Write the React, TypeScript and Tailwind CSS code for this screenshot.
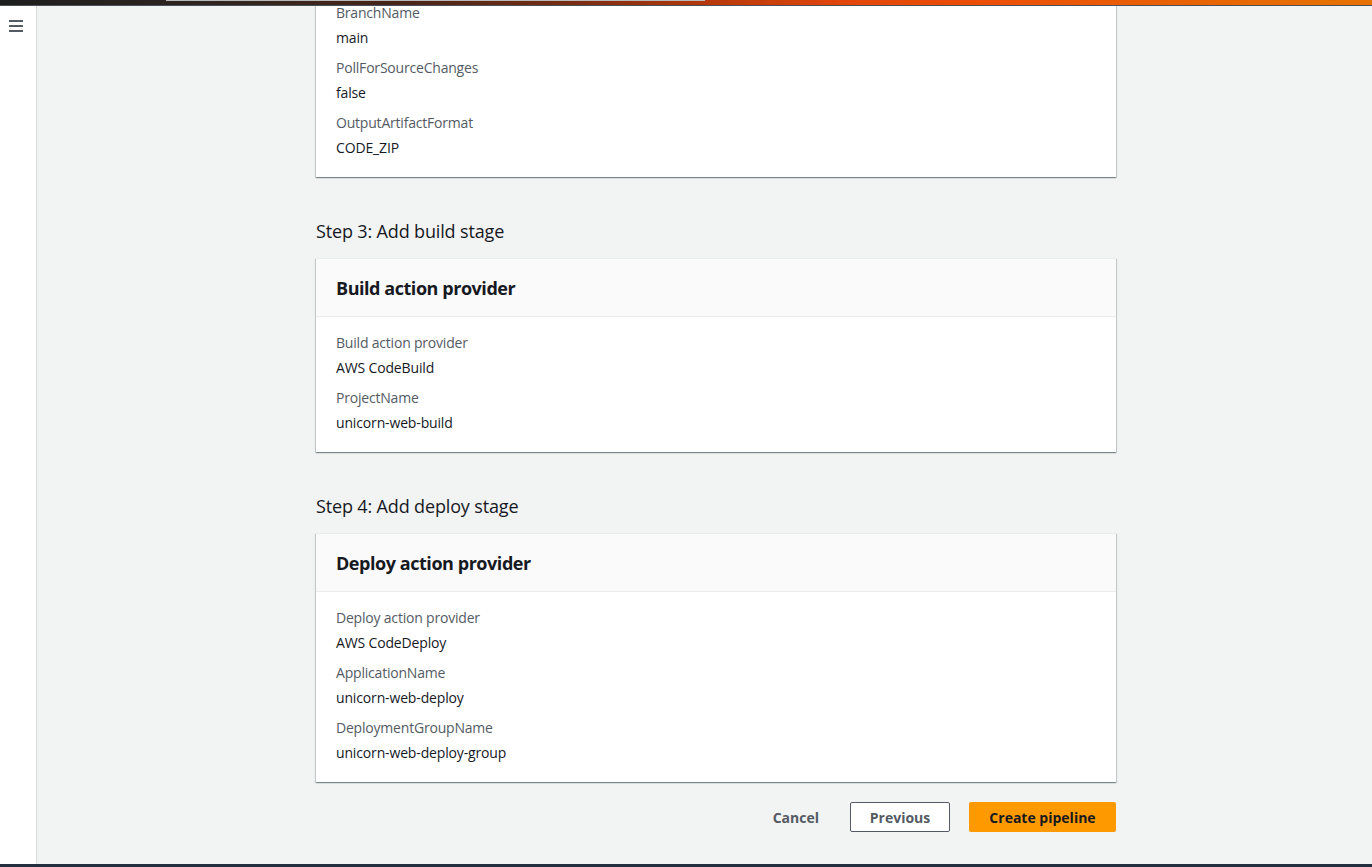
import React from "react";

const font = { fontFamily: '"Open Sans", "Noto Sans", Arial, sans-serif' };

function Field({ label, value }: { label: string; value: string }) {
  return (
    <div className="mb-[10px] last:mb-0">
      <div className="text-[14px] leading-[20px] tracking-[-0.2px] text-[#545b64]">{label}</div>
      <div className="mt-[5px] text-[14px] leading-[20px] tracking-[-0.15px] text-[#16191f]">{value}</div>
    </div>
  );
}

const cardCls =
  "bg-white shadow-[0_1px_1px_0_rgba(0,28,36,0.3),1px_1px_1px_0_rgba(0,28,36,0.15),-1px_1px_1px_0_rgba(0,28,36,0.15)] border-t border-[#eaeded]";

function Card({ title, fields }: { title?: string; fields: [string, string][] }) {
  return (
    <div className={cardCls}>
      {title && (
        <div className="h-[58px] box-border border-b border-[#eaeded] bg-[#fafafa] px-5 flex items-center">
          <h2 className="text-[18px] leading-[22px] font-bold tracking-[-0.45px] text-[#16191f]">{title}</h2>
        </div>
      )}
      <div className="px-5 pt-4 pb-[19px]">
        {fields.map(([l, v]) => (
          <Field key={l} label={l} value={v} />
        ))}
      </div>
    </div>
  );
}

function StepHeading({ children }: { children: React.ReactNode }) {
  return (
    <h2 className="mt-[43px] mb-[16px] text-[18px] leading-[22px] font-normal tracking-[-0.15px] text-[#16191f]">
      {children}
    </h2>
  );
}

export default function App() {
  return (
    <div className="h-[867px] w-full flex flex-col overflow-hidden bg-[#f2f3f3]" style={font}>
      {/* top strip */}
      <div className="relative z-10 h-[6px] shrink-0 border-b border-[#4b5058] bg-[linear-gradient(90deg,#1e1e1e_0%,#2e2420_15%,#4a2619_30%,#7a2c12_42%,#b8390a_52%,#e4460a_62%,#ec4e04_72%,#e86402_88%,#e67200_100%)]">
        <div className="absolute left-[166px] top-0 h-px w-[539px] bg-[#b9b9b9]" />
      </div>
      <div className="flex flex-1 min-h-0">
        {/* sidebar */}
        <div className="w-[37px] shrink-0 bg-white border-r border-[#d5dbdb] pt-[14px] pl-[9px]">
          <svg width="14" height="12" viewBox="0 0 14 12" aria-label="menu">
            <rect x="0" y="0" width="14" height="2" fill="#545b64" />
            <rect x="0" y="5" width="14" height="2" fill="#545b64" />
            <rect x="0" y="10" width="14" height="2" fill="#545b64" />
          </svg>
        </div>
        {/* main */}
        <div className="flex-1 min-w-0 overflow-hidden">
          <div className="ml-[279px] w-[800px] mt-[-75px]">
            <Card
              fields={[
                ["FullRepositoryId", "unicorn-web-project"],
                ["BranchName", "main"],
                ["PollForSourceChanges", "false"],
                ["OutputArtifactFormat", "CODE_ZIP"],
              ]}
            />
            <StepHeading>Step 3: Add build stage</StepHeading>
            <Card
              title="Build action provider"
              fields={[
                ["Build action provider", "AWS CodeBuild"],
                ["ProjectName", "unicorn-web-build"],
              ]}
            />
            <StepHeading>Step 4: Add deploy stage</StepHeading>
            <Card
              title="Deploy action provider"
              fields={[
                ["Deploy action provider", "AWS CodeDeploy"],
                ["ApplicationName", "unicorn-web-deploy"],
                ["DeploymentGroupName", "unicorn-web-deploy-group"],
              ]}
            />
            <div className="mt-[20px] flex justify-end items-center">
              <button className="h-[30px] px-5 text-[14px] font-bold text-[#545b64]">Cancel</button>
              <button className="ml-[11px] h-[30px] w-[100px] box-border border border-[#545b64] rounded-[2px] bg-white text-[14px] font-bold text-[#545b64]">
                Previous
              </button>
              <button className="ml-[19px] h-[30px] w-[147px] rounded-[2px] bg-[#ff9900] text-[14px] font-bold text-[#16191f]">
                Create pipeline
              </button>
            </div>
          </div>
        </div>
      </div>
      <div className="h-[3px] shrink-0 bg-[#232f3e]" />
    </div>
  );
}
